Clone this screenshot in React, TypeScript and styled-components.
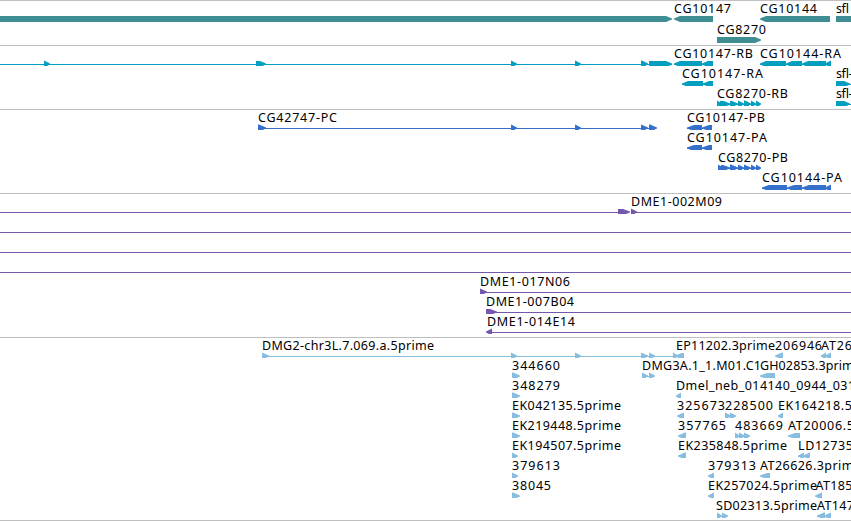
import React, { FC } from 'react'
import styled, { createGlobalStyle } from 'styled-components'

const GlobalStyle = createGlobalStyle`
  body {
    margin: 0;
    background: #fff;
    overflow: hidden;
  }
`

const Browser = styled.main`
  display: flex;
  flex-direction: column;
  width: 851px;
  height: 521px;
  box-sizing: border-box;
  border-top: 1px solid #bebebe;
  background: #fff;
  overflow: hidden;
`

const TrackWrapper = styled.section<{ $gap: number; $color: string }>`
  flex: none;
  padding-bottom: ${p => p.$gap}px;
  border-bottom: 1px solid #bebebe;
  color: ${p => p.$color};
`

const Lane = styled.svg<{ $height: number }>`
  display: block;
  width: 851px;
  height: ${p => p.$height}px;
  overflow: hidden;
  fill: currentColor;
`

const Label = styled.text`
  font-family: 'Noto Sans', 'DejaVu Sans', sans-serif;
  font-size: 12.5px;
  fill: #000;
`

// [start, end, text]
type LabelData = [number, number, string]
// [start, end]
type Span = [number, number]

interface LaneData {
  labels?: LabelData[]
  lines?: Span[]
  fwd?: Span[]
  rev?: Span[]
}

interface TrackData {
  name: string
  color: string
  laneHeight: number
  gap: number
  tip: number
  lanes: LaneData[]
}

const estLane = (name: string, end: number, glyphEnd: number): LaneData => ({
  labels: [[512, end, name]],
  fwd: [[512, glyphEnd]],
})

const join = (a: LaneData, b: LaneData): LaneData => ({
  labels: [...(a.labels || []), ...(b.labels || [])],
  lines: [...(a.lines || []), ...(b.lines || [])],
  fwd: [...(a.fwd || []), ...(b.fwd || [])],
  rev: [...(a.rev || []), ...(b.rev || [])],
})

const tracks: TrackData[] = [
  {
    name: 'genes',
    color: '#3f8e94',
    laneHeight: 21,
    gap: 2,
    tip: 6,
    lanes: [
      {
        labels: [[674, 731, 'CG10147'], [760, 817, 'CG10144'], [836, 849, 'sfl']],
        fwd: [[0, 672], [836, 860]],
        rev: [[674, 713], [760, 830]],
      },
      { labels: [[717, 766, 'CG8270']], fwd: [[717, 761]] },
    ],
  },
  {
    name: 'transcripts',
    color: '#049fbf',
    laneHeight: 20,
    gap: 3,
    tip: 6,
    lanes: [
      {
        labels: [[674, 753, 'CG10147-RB'], [760, 841, 'CG10144-RA']],
        lines: [[0, 672], [674, 713], [760, 831]],
        fwd: [[44, 50], [256, 266], [511, 517], [575, 581], [641, 648], [649, 672]],
        rev: [[674, 702], [702, 713], [760, 786], [786, 802], [802, 826], [825, 831]],
      },
      {
        labels: [[682, 763, 'CG10147-RA'], [836, 852.5, 'sfl-']],
        lines: [[682, 713], [836, 851]],
        fwd: [[836, 850]],
        rev: [[682, 703], [703, 713]],
      },
      {
        labels: [[717, 788, 'CG8270-RB'], [836, 852.5, 'sfl-']],
        lines: [[717, 760], [836, 851]],
        fwd: [[717, 722], [720, 730], [730, 738], [738, 744], [744, 751], [751, 756], [756, 761], [836, 850]],
      },
    ],
  },
  {
    name: 'proteins',
    color: '#3470cc',
    laneHeight: 20,
    gap: 3,
    tip: 7,
    lanes: [
      {
        labels: [[258, 337, 'CG42747-PC'], [687, 765, 'CG10147-PB']],
        lines: [[258, 656], [687, 712]],
        fwd: [[258, 266], [511, 517], [575, 581], [641, 648], [649, 657]],
        rev: [[687, 702], [702, 712]],
      },
      {
        labels: [[687, 767, 'CG10147-PA']],
        lines: [[687, 712]],
        rev: [[687, 702], [702, 712]],
      },
      {
        labels: [[718, 788, 'CG8270-PB']],
        lines: [[718, 760]],
        fwd: [[718, 723], [721, 730], [730, 738], [738, 744], [744, 751], [751, 756], [756, 761]],
      },
      {
        labels: [[762, 842, 'CG10144-PA']],
        lines: [[762, 831]],
        rev: [[762, 787], [787, 802], [802, 826], [825, 831]],
      },
    ],
  },
  {
    name: 'insertions',
    color: '#7458ae',
    laneHeight: 20,
    gap: 3,
    tip: 7,
    lanes: [
      {
        labels: [[631, 722, 'DME1-002M09']],
        lines: [[0, 629], [631, 851]],
        fwd: [[618, 630], [631, 637]],
      },
      { lines: [[0, 851]] },
      { lines: [[0, 851]] },
      { lines: [[0, 851]] },
      { labels: [[480, 570, 'DME1-017N06']], lines: [[480, 851]], fwd: [[480, 487]] },
      { labels: [[486, 574, 'DME1-007B04']], lines: [[486, 851]], fwd: [[486, 497]] },
      { labels: [[487, 575, 'DME1-014E14']], lines: [[487, 851]], rev: [[486, 492]] },
    ],
  },
  {
    name: 'ests',
    color: '#87bddf',
    laneHeight: 20,
    gap: 2,
    tip: 7,
    lanes: [
      {
        labels: [[262, 434, 'DMG2-chr3L.7.069.a.5prime'], [676, 775, 'EP11202.3prime'], [775, 822, '206946'], [821, 852, 'AT26']],
        lines: [[262, 684], [821, 831]],
        fwd: [[262, 269], [511, 517], [575, 581], [641, 648], [649, 655], [673, 678]],
        rev: [[675, 684], [775, 783], [821, 826], [825, 831]],
      },
      join(estLane('344660', 560, 520), {
        labels: [[642, 761, 'DMG3A.1_1.M01.C1'], [760, 861, 'GH02853.3prime']],
        lines: [[642, 653]],
        fwd: [[642, 648], [649, 655]],
        rev: [[760, 775]],
      }),
      join(estLane('348279', 560, 520), {
        labels: [[676, 855, 'Dmel_neb_014140_0944_031']],
        rev: [[676, 681]],
      }),
      join(estLane('EK042135.5prime', 621, 520), {
        labels: [[677, 725, '325673'], [725, 773, '228500'], [778, 852, 'EK164218.5']],
        lines: [[725, 734]],
        fwd: [[725, 731], [730, 736]],
        rev: [[677, 684], [778, 783]],
      }),
      join(estLane('EK219448.5prime', 621, 520), {
        labels: [[678, 726, '357765'], [735, 783, '483669'], [788, 854, 'AT20006.5']],
        lines: [[735, 748]],
        fwd: [[735, 740], [739, 745], [744, 750]],
        rev: [[678, 686], [788, 800]],
      }),
      join(estLane('EK194507.5prime', 621, 518), {
        labels: [[678, 787, 'EK235848.5prime'], [798, 853, 'LD12735']],
        lines: [[798, 810]],
        rev: [[678, 686], [798, 804], [803, 810]],
      }),
      join(estLane('379613', 560, 518), {
        labels: [[708, 756, '379313'], [760, 861, 'AT26626.3prime']],
        rev: [[708, 714], [760, 770]],
      }),
      join(estLane('38045', 551, 520), {
        labels: [[708, 817, 'EK257024.5prime'], [815.5, 852.5, 'AT185']],
        rev: [[708, 714], [815, 822]],
      }),
      {
        labels: [[716, 817, 'SD02313.5prime'], [817, 854, 'AT147']],
        lines: [[717, 726], [817, 831]],
        fwd: [[717, 722], [722, 728]],
        rev: [[817, 825], [824, 831]],
      },
    ],
  },
]

const GLYPH_TOP = 15

const arrow = ([start, end]: Span, tip: number, reverse: boolean) => {
  const length = Math.min(tip, end - start)
  const base = reverse ? start + length : end - length
  const point = reverse ? start : end
  const tail = reverse ? end : start
  // short arrows are drawn slightly taller so they stand out from the line
  const extra = end - start <= tip + 1 ? 0.5 : 0
  const top = GLYPH_TOP - extra
  const bottom = GLYPH_TOP + 6 + extra
  return [
    [tail, top],
    [base, top],
    [point, GLYPH_TOP + 2.6],
    [point, GLYPH_TOP + 3.6],
    [base, bottom],
    [tail, bottom],
  ].join(' ')
}

const Track: FC<{ track: TrackData }> = ({ track }) => (
  <TrackWrapper $gap={track.gap} $color={track.color} aria-label={track.name}>
    {track.lanes.map((lane, i) => (
      <Lane key={i} $height={track.laneHeight}>
        {lane.lines?.map(([start, end]) => (
          <rect key={start} x={start} y={18} width={end - start} height={1} />
        ))}
        {lane.fwd?.map(span => (
          <polygon key={span[0]} points={arrow(span, track.tip, false)} />
        ))}
        {lane.rev?.map(span => (
          <polygon key={span[0]} points={arrow(span, track.tip, true)} />
        ))}
        {lane.labels?.map(([start, end, text]) => (
          <Label key={text} x={start} y={12} textLength={end - start}>
            {text}
          </Label>
        ))}
      </Lane>
    ))}
  </TrackWrapper>
)

const App: FC = () => (
  <>
    <GlobalStyle />
    <Browser>
      {tracks.map(track => (
        <Track key={track.name} track={track} />
      ))}
    </Browser>
  </>
)

export default App
